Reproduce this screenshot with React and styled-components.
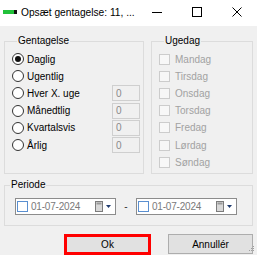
import React from "react";
import styled, { createGlobalStyle } from "styled-components";

const GlobalStyle = createGlobalStyle`
  html, body { margin: 0; padding: 0; background: #f0f0f0; }
  body { font-family: "Liberation Sans", Arial, sans-serif; }
`;

const Window = styled.div`
  width: 257px;
  height: 255px;
  background: #f0f0f0;
  display: flex;
  flex-direction: column;
  overflow: hidden;
  position: relative;
  font-size: 10px;
  color: #000;
`;

const TitleBar = styled.div`
  height: 26px;
  background: #fff;
  display: flex;
  align-items: center;
  flex-shrink: 0;
`;

const AppIcon = styled.svg`
  width: 14px;
  height: 4px;
  margin: 0 4px 3px 3px;
  flex-shrink: 0;
`;

const Title = styled.span`
  flex: 1;
  font-size: 10.2px;
  white-space: nowrap;
  margin-bottom: 2px;
`;

const Controls = styled.div`
  display: flex;
  height: 100%;
`;

const ControlButton = styled.div`
  width: 40px;
  height: 100%;
  display: flex;
  align-items: center;
  justify-content: center;
  padding-bottom: 2px;
  box-sizing: border-box;
`;

const Body = styled.div`
  flex: 1;
  padding: 9px 4px 0 4px;
  display: flex;
  flex-direction: column;
`;

const TopRow = styled.div`
  display: flex;
  gap: 7px;
`;

const Group = styled.fieldset`
  margin: 0;
  padding: ${p => p.$pad || "0"};
  border: 1px solid #dcdcdc;
  width: ${p => (p.$width ? p.$width + "px" : "auto")};
  flex: ${p => (p.$width ? "none" : "1")};
  height: ${p => p.$height}px;
  box-sizing: border-box;
  min-width: 0;
`;

const Legend = styled.legend`
  font-size: 10px;
  line-height: 12px;
  padding: 0 1px;
  margin-left: 5px;
  color: #000;
`;

const Row = styled.div`
  height: 17.2px;
  display: flex;
  align-items: center;
`;

const Radio = styled.span`
  width: 12px;
  height: 12px;
  border: 1px solid #333;
  border-radius: 50%;
  background: #fff;
  box-sizing: border-box;
  display: flex;
  align-items: center;
  justify-content: center;
  flex-shrink: 0;
  &::after {
    content: "";
    width: 6px;
    height: 6px;
    border-radius: 50%;
    background: ${p => (p.$checked ? "#111" : "transparent")};
  }
`;

const Label = styled.span`
  margin-left: ${p => p.$gap || 3}px;
  color: ${p => (p.$disabled ? "#a2a2a2" : "#000")};
  white-space: nowrap;
`;

const NumberBox = styled.span`
  margin-left: auto;
  width: 28px;
  height: 16px;
  border: 1px solid #cfcfcf;
  background: #f0f0f0;
  color: #8a8a8a;
  box-sizing: border-box;
  padding-left: 3px;
  display: flex;
  align-items: center;
`;

const Check = styled.span`
  width: 11px;
  height: 11px;
  border: 1px solid #cccccc;
  background: #f7f7f7;
  box-sizing: border-box;
  flex-shrink: 0;
`;

const PeriodRow = styled.div`
  display: flex;
  align-items: center;
  padding: 7px 0 0 10px;
`;

const DatePicker = styled.div`
  width: 101px;
  height: 17px;
  border: 1px solid #8c8c8c;
  background: #fff;
  box-sizing: border-box;
  display: flex;
  align-items: center;
  padding-left: 1px;
`;

const PickerCheck = styled.span`
  width: 11px;
  height: 11px;
  border: 1px solid #5a8fd0;
  background: #fff;
  box-sizing: border-box;
  flex-shrink: 0;
`;

const DateText = styled.span`
  margin-left: 3px;
  color: #7a7a7a;
  flex: 1;
  letter-spacing: -0.2px;
`;

const Dash = styled.span`
  width: 20px;
  text-align: center;
  color: #333;
`;

const ButtonRow = styled.div`
  display: flex;
  justify-content: flex-end;
  align-items: flex-start;
  gap: 17px;
  margin-top: 8px;
`;

const Button = styled.div`
  width: ${p => p.$width}px;
  height: ${p => p.$height}px;
  box-sizing: border-box;
  border: ${p => (p.$marked ? "3px solid #ff0000" : "1px solid #adadad")};
  background: #e1e1e1;
  display: flex;
  align-items: center;
  justify-content: center;
  font-size: 10px;
`;

const Grip = styled.svg`
  position: absolute;
  right: 2px;
  bottom: 3px;
`;

const CalendarIcon = () => (
  <svg width="16" height="11" viewBox="0 0 16 11" style={{ marginRight: 4 }}>
    <rect x="0.5" y="0.5" width="7" height="10" fill="#d8d8d8" stroke="#7c7c7c" />
    <rect x="1.5" y="1.5" width="5" height="2" fill="#9a9a9a" />
    <path d="M11 4 L16 4 L13.5 7 Z" fill="#1e3a6e" />
  </svg>
);

const intervals = [
  { label: "Daglig", checked: true },
  { label: "Ugentlig" },
  { label: "Hver X. uge", box: true },
  { label: "Månedtlig", box: true },
  { label: "Kvartalsvis", box: true },
  { label: "Årlig", box: true },
];

const days = ["Mandag", "Tirsdag", "Onsdag", "Torsdag", "Fredag", "Lørdag", "Søndag"];

export default function App() {
  return (
    <>
      <GlobalStyle />
      <Window>
        <TitleBar>
          <AppIcon viewBox="0 0 14 4">
            <rect x="0" y="0" width="11" height="4" fill="#22c13a" />
            <rect x="11" y="0" width="3" height="4" fill="#111" />
          </AppIcon>
          <Title>Opsæt gentagelse: 11, ...</Title>
          <Controls>
            <ControlButton>
              <svg width="10" height="10" viewBox="0 0 10 10">
                <path d="M0 5.5 H10" stroke="#000" strokeWidth="1" />
              </svg>
            </ControlButton>
            <ControlButton>
              <svg width="10" height="10" viewBox="0 0 10 10">
                <rect x="0.5" y="0.5" width="9" height="9" fill="none" stroke="#000" />
              </svg>
            </ControlButton>
            <ControlButton>
              <svg width="10" height="10" viewBox="0 0 10 10">
                <path d="M0.5 0.5 L9.5 9.5 M9.5 0.5 L0.5 9.5" stroke="#000" strokeWidth="1" />
              </svg>
            </ControlButton>
          </Controls>
        </TitleBar>
        <Body>
          <TopRow>
            <Group $width={140} $height={139} $pad="3.5px 3px 0 7px">
              <Legend>Gentagelse</Legend>
              {intervals.map(item => (
                <Row key={item.label}>
                  <Radio $checked={item.checked} />
                  <Label>{item.label}</Label>
                  {item.box && <NumberBox>0</NumberBox>}
                </Row>
              ))}
            </Group>
            <Group $height={139} $pad="3.5px 3px 0 7px">
              <Legend>Ugedag</Legend>
              {days.map(day => (
                <Row key={day}>
                  <Check />
                  <Label $gap={5} $disabled>{day}</Label>
                </Row>
              ))}
            </Group>
          </TopRow>
          <Group $height={42} style={{ marginTop: 5 }}>
            <Legend>Periode</Legend>
            <PeriodRow>
              <DatePicker>
                <PickerCheck />
                <DateText>01-07-2024</DateText>
                <CalendarIcon />
              </DatePicker>
              <Dash>-</Dash>
              <DatePicker>
                <PickerCheck />
                <DateText>01-07-2024</DateText>
                <CalendarIcon />
              </DatePicker>
            </PeriodRow>
          </Group>
          <ButtonRow>
            <Button $width={87} $height={21} $marked>Ok</Button>
            <Button $width={85} $height={20}>Annullér</Button>
          </ButtonRow>
        </Body>
        <Grip width="6" height="6" viewBox="0 0 6 6">
          <rect x="4" y="0" width="1" height="1" fill="#a0a0a0" />
          <rect x="2" y="2" width="1" height="1" fill="#a0a0a0" />
          <rect x="4" y="2" width="1" height="1" fill="#a0a0a0" />
          <rect x="0" y="4" width="1" height="1" fill="#a0a0a0" />
          <rect x="2" y="4" width="1" height="1" fill="#a0a0a0" />
          <rect x="4" y="4" width="1" height="1" fill="#a0a0a0" />
        </Grip>
      </Window>
    </>
  );
}
